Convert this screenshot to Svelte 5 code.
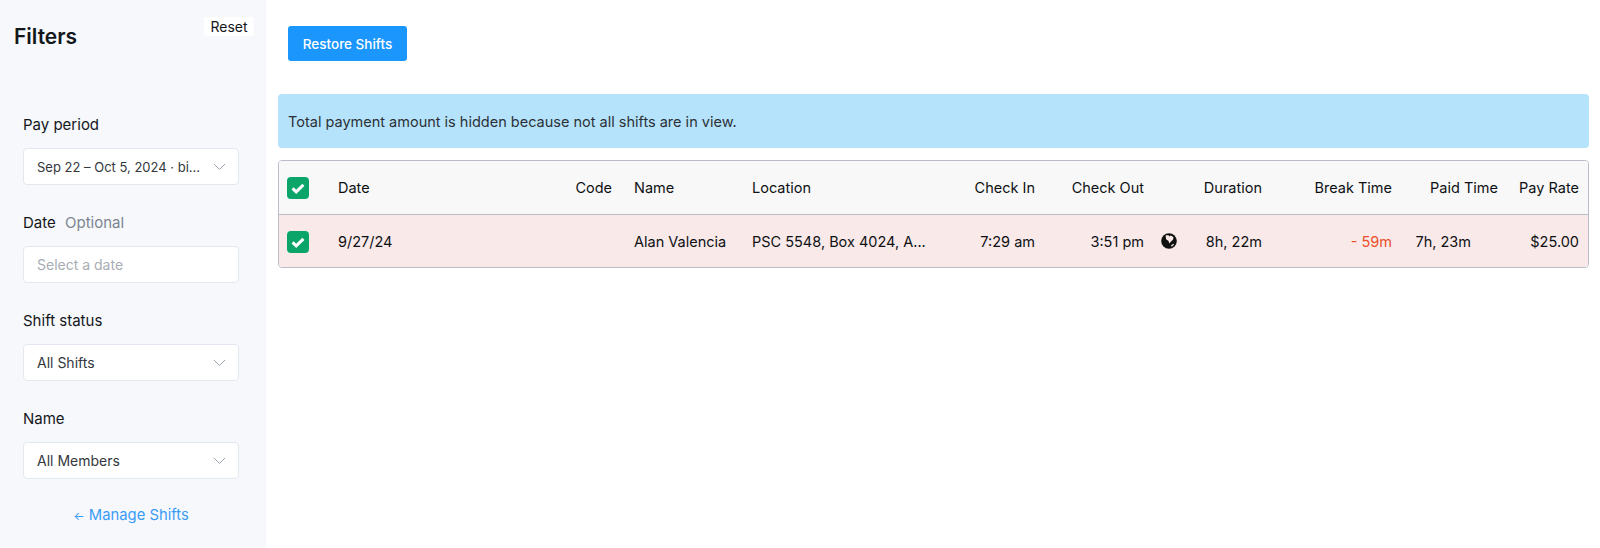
<script lang="ts">
	const filters = [
		{ label: 'Pay period', value: 'Sep 22 – Oct 5, 2024 · bi...', select: true, compact: true },
		{ label: 'Date', hint: 'Optional', value: 'Select a date', select: false },
		{ label: 'Shift status', value: 'All Shifts', select: true },
		{ label: 'Name', value: 'All Members', select: true }
	];
</script>

<div class="page">
	<aside class="sidebar">
		<div class="sidebar-head">
			<h2>Filters</h2>
			<button class="reset">Reset</button>
		</div>
		<div class="filters">
			{#each filters as filter}
				<div class="filter">
					<p class="label">
						{filter.label}
						{#if filter.hint}<span class="hint">{filter.hint}</span>{/if}
					</p>
					<div class="field" class:placeholder={!filter.select} class:compact={filter.compact}>
						<span>{filter.value}</span>
						{#if filter.select}
							<svg class="chevron" width="13" height="8" viewBox="0 0 13 8" fill="none">
								<path d="M1 1l5.5 5.5L12 1" stroke="#9aa3ad" stroke-width="1" />
							</svg>
						{/if}
					</div>
				</div>
			{/each}
		</div>
		<a class="manage" href="#shifts"><span class="arrow">←</span> Manage Shifts</a>
	</aside>

	<main class="content">
		<button class="restore">Restore Shifts</button>
		<div class="banner">Total payment amount is hidden because not all shifts are in view.</div>
		<div class="table">
			<div class="row head">
				<div class="box">
					<svg width="22" height="22" viewBox="0 0 22 22">
						<rect width="22" height="22" rx="4" fill="#0ba56a" />
						<path d="M5.6 11.4l3.6 3.4L16.4 7.8" fill="none" stroke="#fff" stroke-width="3" />
					</svg>
				</div>
				<div>Date</div>
				<div class="right">Code</div>
				<div class="name">Name</div>
				<div>Location</div>
				<div class="right">Check In</div>
				<div class="right">Check Out</div>
				<div></div>
				<div class="right">Duration</div>
				<div class="right">Break Time</div>
				<div class="right">Paid Time</div>
				<div class="right">Pay Rate</div>
			</div>
			<div class="row body">
				<div class="box">
					<svg width="22" height="22" viewBox="0 0 22 22">
						<rect width="22" height="22" rx="4" fill="#0ba56a" />
						<path d="M5.6 11.4l3.6 3.4L16.4 7.8" fill="none" stroke="#fff" stroke-width="3" />
					</svg>
				</div>
				<div>9/27/24</div>
				<div></div>
				<div class="name">Alan Valencia</div>
				<div>PSC 5548, Box 4024, A...</div>
				<div class="right">7:29 am</div>
				<div class="right">3:51 pm</div>
				<div class="globe">
					<svg width="16" height="16" viewBox="0 0 16 16">
						<circle cx="8" cy="8" r="7.8" fill="#111" />
						<path d="M4.6 2.6c1-.5 2.2-.6 3.2-.2l.6 1 1.2-.9c1.2.3 2.2 1 2.9 2l-.5 2.3-2 1.7-1.6 2-.9-2.6-2.4-1.6z" fill="#f9e9e9" />
						<path d="M10.2 12.2l2.3-1.5.6.6-1.7 1.9-1.2.3z" fill="#f9e9e9" />
					</svg>
				</div>
				<div class="right">8h, 22m</div>
				<div class="right late">- 59m</div>
				<div class="right paid">7h, 23m</div>
				<div class="right">$25.00</div>
			</div>
		</div>
	</main>
</div>

<style>
	:global(body) {
		margin: 0;
		background: #fff;
	}
	.page {
		display: flex;
		height: 548px;
		overflow: hidden;
		font-family: Inter, 'Liberation Sans', sans-serif;
		font-size: 14px;
		color: #14171a;
	}
	.sidebar {
		width: 266px;
		flex: none;
		box-sizing: border-box;
		padding: 17px 12px 0 14px;
		background: #f6f8fc;
	}
	.sidebar-head {
		display: flex;
		justify-content: space-between;
		align-items: flex-start;
		height: 98px;
	}
	h2 {
		margin: 8px 0 0;
		font-size: 21px;
		line-height: 24px;
		font-weight: 600;
	}
	.reset {
		width: 50px;
		height: 19px;
		padding: 0;
		border: none;
		border-radius: 3px;
		background: #fff;
		color: #14171a;
		font: inherit;
		font-size: 14px;
	}
	.filters {
		display: flex;
		flex-direction: column;
		gap: 28px;
		margin-left: 9px;
		margin-right: 15px;
	}
	.label {
		margin: 0 0 13px;
		line-height: 20px;
		font-size: 15px;
	}
	.hint {
		margin-left: 5px;
		color: #7c8590;
	}
	.field {
		display: flex;
		align-items: center;
		justify-content: space-between;
		box-sizing: border-box;
		height: 37px;
		padding: 0 12px 0 13px;
		border: 1px solid #e3e8f0;
		border-radius: 4px;
		background: #fff;
		font-size: 14px;
		color: #33383d;
	}
	.compact {
		font-size: 13px;
	}
	.placeholder {
		color: #a8adb3;
	}
	.manage {
		display: block;
		margin: 26px 15px 0 9px;
		text-align: center;
		font-size: 14.8px;
		line-height: 20px;
		color: #3b9cf5;
		text-decoration: none;
	}
	.arrow {
		font-size: 12px;
	}
	.content {
		flex: 1;
		box-sizing: border-box;
		padding: 26px 11px 0 12px;
	}
	.restore {
		display: block;
		width: 119px;
		height: 35px;
		margin: 0 0 33px 10px;
		padding: 0;
		border: none;
		border-radius: 3px;
		background: #1a96fc;
		color: #fff;
		font: inherit;
		font-size: 13.5px;
		font-weight: 500;
	}
	.banner {
		box-sizing: border-box;
		height: 54px;
		padding: 0 10px;
		margin-bottom: 12px;
		border-radius: 4px;
		background: #b6e3fc;
		line-height: 55px;
		font-size: 14.5px;
		color: #2b3136;
	}
	.table {
		box-sizing: border-box;
		height: 108px;
		border: 1px solid #b9bdc6;
		border-radius: 4px;
		overflow: hidden;
	}
	.row {
		display: grid;
		grid-template-columns: 59px 202px 72px 140px 198px 85px 109px 47px 71px 130px 106px 81px;
		align-items: center;
		height: 53px;
		font-size: 14.5px;
		color: #0e1114;
	}
	.head {
		border-bottom: 1px solid #b9bdc6;
		background: #f8f8f8;
	}
	.body {
		background: #f9e9e9;
	}
	.box {
		display: flex;
		padding-left: 8px;
	}
	.right {
		text-align: right;
	}
	.name {
		padding-left: 22px;
	}
	.globe {
		display: flex;
		padding-left: 17px;
		margin-top: -2px;
	}
	.late {
		color: #e8502a;
	}
	.paid {
		padding-right: 27px;
	}
</style>
